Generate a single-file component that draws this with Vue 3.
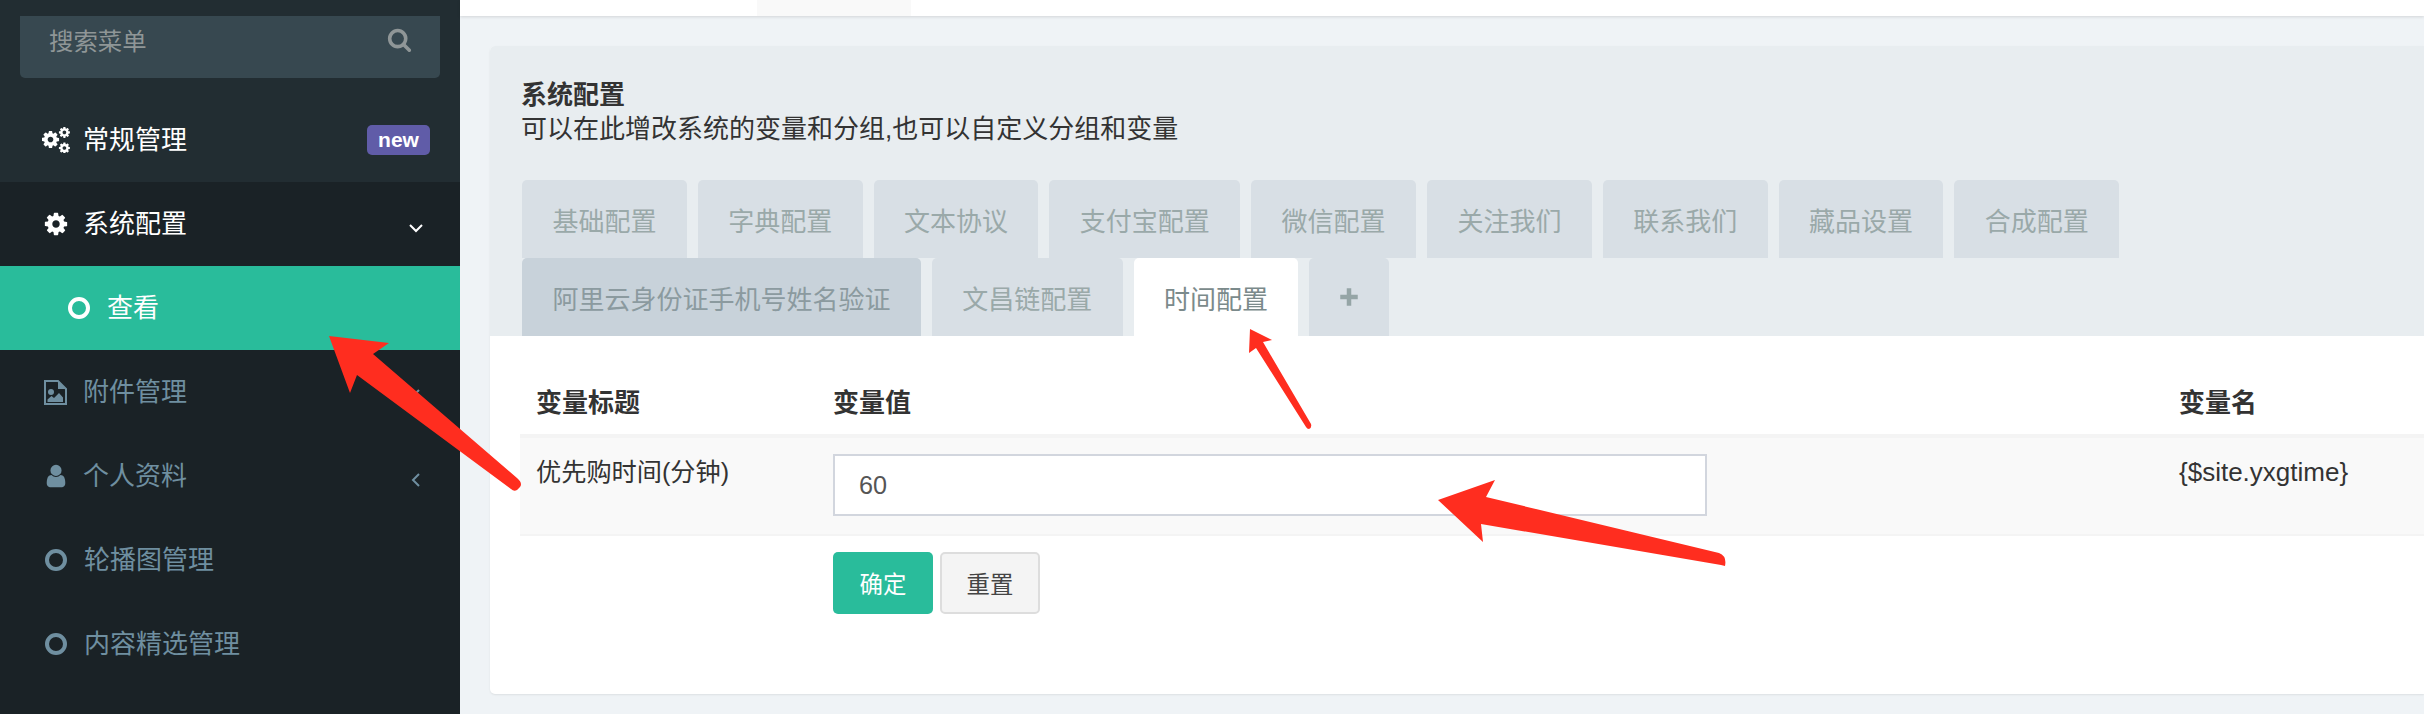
<script setup>
const cogPath = 'M1152 896q0-106-75-181t-181-75-181 75-75 181 75 181 181 75 181-75 75-181zm512-109v222q0 12-8 23t-20 13l-185 28q-19 54-39 91 35 50 107 138 10 12 10 25t-9 23q-27 37-99 108t-94 71q-12 0-26-9l-138-108q-44 23-91 38-16 136-29 186-7 28-36 28h-222q-14 0-24.5-8.5t-11.5-21.5l-28-184q-49-16-90-37l-141 107q-10 9-25 9-14 0-25-11-126-114-165-168-7-10-7-23 0-12 8-23 15-21 51-66.5t54-70.5q-27-50-41-99l-183-27q-13-2-21-12.5t-8-23.5v-222q0-12 8-23t19-13l186-28q14-46 39-92-40-57-107-138-10-12-10-24 0-10 9-23 26-36 98.5-107.5t94.5-71.5q13 0 26 10l138 107q44-23 91-38 16-136 29-186 7-28 36-28h222q14 0 24.5 8.5t11.5 21.5l28 184q49 16 90 37l142-107q9-9 24-9 13 0 25 10 129 119 165 170 7 8 7 22 0 12-8 23-15 21-51 66.5t-54 70.5q26 50 41 98l183 28q13 2 21 12.5t8 23.5z'
const userPath = 'M1536 1399q0 109-62.5 187t-150.5 78h-854q-88 0-150.5-78t-62.5-187q0-85 8.5-160.5t31.5-152 58.5-131 94-89 134.5-34.5q131 128 313 128t313-128q76 0 134.5 34.5t94 89 58.5 131 31.5 152 8.5 160.5zm-256-887q0 159-112.5 271.5t-271.5 112.5-271.5-112.5-112.5-271.5 112.5-271.5 271.5-112.5 271.5 112.5 112.5 271.5z'
const searchPath = 'M1216 832q0-185-131.5-316.5t-316.5-131.5-316.5 131.5-131.5 316.5 131.5 316.5 316.5 131.5 316.5-131.5 131.5-316.5zm512 832q0 52-38 90t-90 38q-54 0-90-38l-343-342q-179 124-399 124-143 0-273.5-55.5t-225-150-150-225-55.5-273.5 55.5-273.5 150-225 225-150 273.5-55.5 273.5 55.5 225 150 150 225 55.5 273.5q0 220-124 399l343 343q37 37 37 90z'

const tabRows = [
  [
    { label: '基础配置' },
    { label: '字典配置' },
    { label: '文本协议' },
    { label: '支付宝配置' },
    { label: '微信配置' },
    { label: '关注我们' },
    { label: '联系我们' },
    { label: '藏品设置' },
    { label: '合成配置' }
  ],
  [
    { label: '阿里云身份证手机号姓名验证', cls: 'hover' },
    { label: '文昌链配置' },
    { label: '时间配置', cls: 'active' }
  ]
]
</script>

<template>
  <div class="page">
    <aside class="sidebar">
      <div class="search">
        <span>搜索菜单</span>
        <svg class="search-icon" viewBox="0 0 1792 1792"><path :d="searchPath" /></svg>
      </div>
      <div class="menu-item top">
        <svg class="ico cogs" viewBox="42 126 28 26">
          <svg x="40.5" y="128.5" width="20" height="20" viewBox="0 0 1792 1792"><path :d="cogPath" /></svg>
          <svg x="58" y="125" width="12.8" height="12.8" viewBox="0 0 1792 1792"><path :d="cogPath" /></svg>
          <svg x="58" y="140.6" width="12.8" height="12.8" viewBox="0 0 1792 1792"><path :d="cogPath" /></svg>
        </svg>
        <span class="label">常规管理</span>
        <span class="badge">new</span>
      </div>
      <div class="menu-dark">
        <div class="menu-item open">
          <svg class="ico" viewBox="0 0 1792 1792"><path :d="cogPath" /></svg>
          <span class="label">系统配置</span>
          <svg class="chev" viewBox="0 0 16 16"><path d="M2 5l6 6 6-6" /></svg>
        </div>
        <div class="menu-item current">
          <i class="ring"></i>
          <span class="label">查看</span>
        </div>
        <div class="menu-item">
          <svg class="ico file" viewBox="0 0 23 25">
            <path class="outline" d="M1 1h13l8 8v15H1z" />
            <path d="M14 1l8 8h-8z" />
            <circle cx="7" cy="12" r="3" />
            <path d="M3.5 22v-2.5l4-3.5 2.5 2 5-5 4 4.5V22z" />
          </svg>
          <span class="label">附件管理</span>
          <svg class="chev left" viewBox="0 0 16 16"><path d="M11 2L5 8l6 6" /></svg>
        </div>
        <div class="menu-item">
          <svg class="ico" viewBox="0 0 1792 1792"><path :d="userPath" /></svg>
          <span class="label">个人资料</span>
          <svg class="chev left" viewBox="0 0 16 16"><path d="M11 2L5 8l6 6" /></svg>
        </div>
        <div class="menu-item">
          <i class="ring"></i>
          <span class="label">轮播图管理</span>
        </div>
        <div class="menu-item">
          <i class="ring"></i>
          <span class="label">内容精选管理</span>
        </div>
      </div>
    </aside>

    <main class="main">
      <header class="topbar"><div class="top-tab"></div></header>
      <section class="panel">
        <div class="panel-head">
          <div class="title">系统配置</div>
          <div class="sub">可以在此增改系统的变量和分组,也可以自定义分组和变量</div>
          <div class="tabs">
            <div v-for="(row, i) in tabRows" :key="i" class="tab-row">
              <div v-for="tab in row" :key="tab.label" class="tab" :class="tab.cls">{{ tab.label }}</div>
              <div v-if="i === 1" class="tab plus">
                <svg viewBox="0 0 16 16"><path d="M6.2 1h3.6v5.2H15v3.6H9.8V15H6.2V9.8H1V6.2h5.2z" /></svg>
              </div>
            </div>
          </div>
        </div>
        <div class="panel-body">
          <div class="grid head">
            <div>变量标题</div>
            <div>变量值</div>
            <div>变量名</div>
          </div>
          <div class="grid row">
            <div class="name">优先购时间(分钟)</div>
            <div class="value"><input class="input" value="60" /></div>
            <div>{$site.yxgtime}</div>
          </div>
          <div class="actions">
            <button class="btn ok">确定</button>
            <button class="btn reset">重置</button>
          </div>
        </div>
      </section>
    </main>

    <svg class="arrows" viewBox="0 0 2424 714" width="2424" height="714">
      <path d="M329 336L389 343 373 354 517 478Q523 483 520 487L517 490Q514 492 511 489L357 375 350 393Z" />
      <path d="M1250 329L1272 340 1263 342 1311 424Q1312 428 1309 429 1307 429 1306 427L1256 348 1249 353Z" />
      <path d="M1438 500L1495 480 1486 497 1719 553Q1727 556 1725 566L1721 565 1481 524 1483 542Z" />
    </svg>
  </div>
</template>

<style scoped>
.page {
  position: relative;
  display: flex;
  width: 2424px;
  height: 714px;
  overflow: hidden;
  background: #eff3f6;
  font-family: "Liberation Sans", "Noto Sans CJK SC", sans-serif;
  font-size: 26px;
  color: #333;
}
.sidebar {
  width: 460px;
  flex: none;
  display: flex;
  flex-direction: column;
  background: #222d32;
  padding-top: 16px;
  box-sizing: border-box;
}
.search {
  margin: 0 20px;
  height: 62px;
  flex: none;
  display: flex;
  justify-content: space-between;
  padding: 8px 28px 0 29px;
  box-sizing: border-box;
  background: #374850;
  border-radius: 0 0 5px 5px;
  color: #8f9697;
  font-size: 24.4px;
  line-height: 35px;
}
.search-icon {
  width: 25px;
  height: 25px;
  margin-top: 3px;
  fill: #8f9697;
}
.menu-item {
  height: 84px;
  display: flex;
  align-items: center;
  padding-left: 42px;
  padding-right: 36px;
  color: #6f8fa0;
  fill: #6f8fa0;
  stroke: none;
}
.menu-item.top {
  height: 104px;
  padding-top: 20px;
  box-sizing: border-box;
  color: #fff;
  fill: #fff;
}
.menu-dark {
  flex: 1;
  background: #1a2226;
}
.menu-item.open {
  color: #fff;
  fill: #fff;
}
.menu-item.current {
  background: #29bc9b;
  color: #fff;
  padding-left: 68px;
}
.ico {
  width: 28px;
  height: 26px;
  flex: none;
  margin-right: 13px;
}
.ico.file {
  width: 23px;
  height: 25px;
  margin: 0 16px 0 2px;
}
.outline {
  fill: none;
  stroke: currentColor;
  stroke-width: 2;
}
.ring {
  width: 22px;
  height: 22px;
  flex: none;
  margin: 0 17px 0 3px;
  box-sizing: border-box;
  border: 4px solid currentColor;
  border-radius: 50%;
}
.current .ring {
  margin: 0 17px 0 0;
}
.label {
  flex: 1;
  line-height: 1;
}
.badge {
  width: 63px;
  height: 30px;
  border-radius: 5px;
  background: #605ca8;
  color: #fff;
  font-weight: 700;
  font-size: 21px;
  line-height: 30px;
  text-align: center;
  margin-right: -6px;
}
.chev {
  width: 16px;
  height: 16px;
  flex: none;
  fill: none;
  stroke: currentColor;
  stroke-width: 2;
  margin-top: 8px;
}
.main {
  flex: 1;
  min-width: 0;
  display: flex;
  flex-direction: column;
}
.topbar {
  height: 16px;
  flex: none;
  background: #fff;
  box-shadow: 0 1px 3px rgba(0, 0, 0, 0.12);
  padding-left: 297px;
}
.top-tab {
  width: 154px;
  height: 16px;
  background: #f9f9f9;
}
.panel {
  margin: 30px 0 0 30px;
  height: 648px;
  display: flex;
  flex-direction: column;
  background: #fff;
  border-radius: 5px 0 0 5px;
  box-shadow: 0 1px 2px rgba(0, 0, 0, 0.08);
  overflow: hidden;
}
.panel-head {
  height: 290px;
  flex: none;
  background: #e8edf0;
  padding: 32px 0 0 31px;
  box-sizing: border-box;
}
.title {
  font-weight: 700;
  line-height: 34px;
}
.sub {
  line-height: 34px;
}
.tabs {
  margin-top: 34px;
  padding-left: 1px;
}
.tab-row {
  display: flex;
  gap: 11px;
  height: 78px;
}
.tab {
  height: 78px;
  padding: 0 30.4px;
  display: flex;
  align-items: center;
  box-sizing: border-box;
  background: #d8dfe5;
  color: #9aa9a9;
  border-radius: 5px 5px 0 0;
}
.tab.hover {
  background: #c8d2da;
  color: #8b9a9f;
}
.tab.active {
  background: #fff;
  color: #7b8a8b;
}
.tab.plus {
  width: 80px;
  padding: 0;
  justify-content: center;
}
.plus svg {
  width: 20px;
  height: 20px;
  fill: #95a5a6;
}
.panel-body {
  flex: 1;
  padding-left: 30px;
}
.grid {
  display: grid;
  grid-template-columns: 313px 1346px 1fr;
}
.grid > div:first-child {
  padding-left: 16px;
}
.name {
  font-size: 25.2px;
}
.head {
  height: 102px;
  padding-top: 30px;
  align-items: center;
  font-weight: 700;
  border-bottom: 4px solid #f4f4f4;
  box-sizing: border-box;
}
.row {
  height: 98px;
  background: #f9f9f9;
  border-bottom: 2px solid #f4f4f4;
  padding-top: 20px;
  box-sizing: border-box;
  line-height: 28px;
}
.value {
  margin-top: -4px;
}
.input {
  display: block;
  width: 874px;
  height: 62px;
  padding: 0 24px;
  box-sizing: border-box;
  border: 2px solid #d2d6de;
  background: #fff;
  color: #555;
  font: inherit;
  font-size: 25.2px;
  outline: none;
}
.actions {
  display: flex;
  gap: 7px;
  padding: 16px 0 0 313px;
}
.btn {
  width: 100px;
  height: 62px;
  border-radius: 5px;
  box-sizing: border-box;
  font: inherit;
  font-size: 23.4px;
  padding: 0;
}
.ok {
  background: #29bc9b;
  border: 0;
  color: #fff;
}
.reset {
  background: #f4f4f4;
  border: 2px solid #ddd;
  color: #444;
}
.arrows {
  position: absolute;
  left: 0;
  top: 0;
  fill: #ff2d1f;
  pointer-events: none;
}
</style>

<style>
html, body {
  margin: 0;
  padding: 0;
}
</style>
